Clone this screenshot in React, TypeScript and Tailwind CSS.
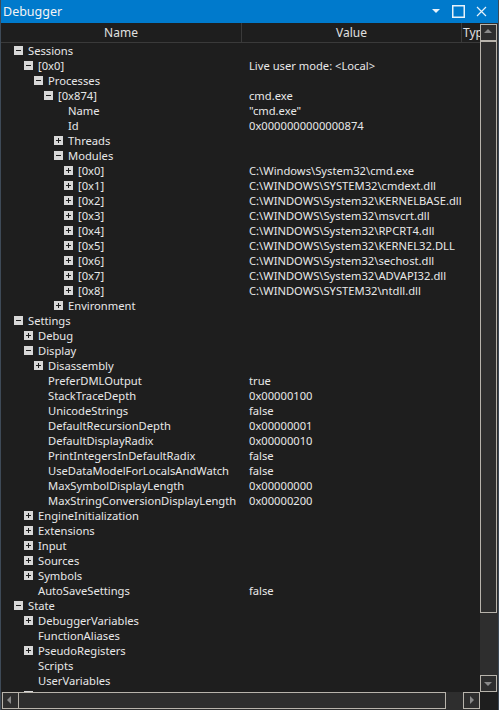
import React from "react";

type Row = {
  level: number;
  name: string;
  value?: string;
  state?: "open" | "closed";
};

const MODULES = [
  "C:\\Windows\\System32\\cmd.exe",
  "C:\\WINDOWS\\SYSTEM32\\cmdext.dll",
  "C:\\WINDOWS\\System32\\KERNELBASE.dll",
  "C:\\WINDOWS\\System32\\msvcrt.dll",
  "C:\\WINDOWS\\System32\\RPCRT4.dll",
  "C:\\WINDOWS\\System32\\KERNEL32.DLL",
  "C:\\WINDOWS\\System32\\sechost.dll",
  "C:\\WINDOWS\\System32\\ADVAPI32.dll",
  "C:\\WINDOWS\\SYSTEM32\\ntdll.dll",
];

const ROWS: Row[] = [
  { level: 0, name: "Sessions", state: "open" },
  { level: 1, name: "[0x0]", value: "Live user mode: <Local>", state: "open" },
  { level: 2, name: "Processes", state: "open" },
  { level: 3, name: "[0x874]", value: "cmd.exe", state: "open" },
  { level: 4, name: "Name", value: "\"cmd.exe\"" },
  { level: 4, name: "Id", value: "0x0000000000000874" },
  { level: 4, name: "Threads", state: "closed" },
  { level: 4, name: "Modules", state: "open" },
  ...MODULES.map((m, i) => ({ level: 5, name: `[0x${i}]`, value: m, state: "closed" as const })),
  { level: 4, name: "Environment", state: "closed" },
  { level: 0, name: "Settings", state: "open" },
  { level: 1, name: "Debug", state: "closed" },
  { level: 1, name: "Display", state: "open" },
  { level: 2, name: "Disassembly", state: "closed" },
  { level: 2, name: "PreferDMLOutput", value: "true" },
  { level: 2, name: "StackTraceDepth", value: "0x00000100" },
  { level: 2, name: "UnicodeStrings", value: "false" },
  { level: 2, name: "DefaultRecursionDepth", value: "0x00000001" },
  { level: 2, name: "DefaultDisplayRadix", value: "0x00000010" },
  { level: 2, name: "PrintIntegersInDefaultRadix", value: "false" },
  { level: 2, name: "UseDataModelForLocalsAndWatch", value: "false" },
  { level: 2, name: "MaxSymbolDisplayLength", value: "0x00000000" },
  { level: 2, name: "MaxStringConversionDisplayLength", value: "0x00000200" },
  { level: 1, name: "EngineInitialization", state: "closed" },
  { level: 1, name: "Extensions", state: "closed" },
  { level: 1, name: "Input", state: "closed" },
  { level: 1, name: "Sources", state: "closed" },
  { level: 1, name: "Symbols", state: "closed" },
  { level: 1, name: "AutoSaveSettings", value: "false" },
  { level: 0, name: "State", state: "open" },
  { level: 1, name: "DebuggerVariables", state: "closed" },
  { level: 1, name: "FunctionAliases" },
  { level: 1, name: "PseudoRegisters", state: "closed" },
  { level: 1, name: "Scripts" },
  { level: 1, name: "UserVariables" },
  { level: 1, name: "ExtensionGallery", state: "closed" },
];

function Expander({ state }: { state: "open" | "closed" }) {
  return (
    <svg width="9" height="9" viewBox="0 0 9 9" className="block">
      <rect x="0" y="0" width="9" height="9" fill="#d8d8d8" />
      <rect x="2" y="4" width="5" height="1" fill="#1e1e1e" />
      {state === "closed" && <rect x="4" y="2" width="1" height="5" fill="#1e1e1e" />}
    </svg>
  );
}

function TreeRow({ row }: { row: Row }) {
  const boxLeft = 14 + row.level * 10;
  const textLeft = boxLeft + 14;
  return (
    <div className="flex h-[15px] items-center shrink-0 whitespace-nowrap">
      <div className="relative w-[241px] shrink-0 h-full flex items-center overflow-hidden">
        {row.state && (
          <div className="absolute top-[3px]" style={{ left: boxLeft - 1 }}>
            <Expander state={row.state} />
          </div>
        )}
        <span style={{ paddingLeft: textLeft - 1 }}>{row.name}</span>
      </div>
      <div className="pl-[7px]">{row.value}</div>
    </div>
  );
}

function ScrollButton({ dir }: { dir: "up" | "down" | "left" | "right" }) {
  const pts = {
    up: "4,9 8,5 12,9",
    down: "4,7 12,7 8,11",
    left: "9,4 9,12 5,8",
    right: "7,4 7,12 11,8",
  }[dir];
  return (
    <div className="w-[17px] h-[17px] border border-[#b8b4ac] flex items-center justify-center shrink-0">
      <svg width="15" height="15" viewBox="1 1 15 15">
        <polygon points={pts} fill="#8a8a8a" />
      </svg>
    </div>
  );
}

export default function App() {
  return (
    <div
      className="w-[499px] h-[710px] bg-[#1e1e1e] text-[#e8e8e8] flex flex-col overflow-hidden border-x border-[#3e4a57] text-[11.2px] leading-[15px]"
      style={{ fontFamily: '"Noto Sans", "Open Sans", sans-serif' }}
    >
      <div className="h-[23px] bg-[#007acc] flex items-center shrink-0 pl-[2px] text-[#f4f4f4]">
        <span className="text-[12.5px]">Debugger</span>
        <div className="ml-auto flex items-center gap-[8px] pr-[11px]">
          <svg width="8" height="5" viewBox="0 0 8 5">
            <polygon points="0,0 8,0 4,4" fill="#e8f2fa" />
          </svg>
          <svg width="13" height="13" viewBox="0 0 13 13" className="ml-[4px]">
            <rect x="0.75" y="0.75" width="11.5" height="11.5" fill="none" stroke="#e8f2fa" strokeWidth="1.5" />
          </svg>
          <svg width="11" height="11" viewBox="0 0 11 11" className="ml-[3px]">
            <path d="M1 1 L10 10 M10 1 L1 10" stroke="#e8f2fa" strokeWidth="1.2" />
          </svg>
        </div>
      </div>

      <div className="flex flex-1 min-h-0">
        <div className="flex-1 min-w-0 flex flex-col overflow-hidden">
          <div className="h-[20px] shrink-0 flex border-b border-[#3a3a3a] text-[#e0e0e0] text-[12px]">
            <div className="w-[241px] shrink-0 flex items-center justify-center border-r border-[#3a3a3a]">Name</div>
            <div className="w-[220px] shrink-0 flex items-center justify-center border-r border-[#3a3a3a]">Value</div>
            <div className="flex items-center pl-[1px] overflow-hidden">Type</div>
          </div>
          <div className="flex flex-col overflow-hidden">
            {ROWS.map((r, i) => (
              <TreeRow key={i} row={r} />
            ))}
          </div>
        </div>
        <div className="w-[18px] shrink-0 bg-[#2e2e2e] flex flex-col pt-[1px] pr-[1px]">
          <ScrollButton dir="up" />
          <div className="h-[572px] border border-[#b8b4ac] shrink-0" />
          <div className="flex-1" />
          <ScrollButton dir="down" />
        </div>
      </div>

      <div className="h-[18px] shrink-0 flex">
        <div className="flex-1 bg-[#2e2e2e] flex items-center pl-[1px] pb-[1px]">
          <ScrollButton dir="left" />
          <div className="w-[427px] h-[17px] border border-[#b8b4ac] border-l-0" />
          <div className="flex-1" />
          <ScrollButton dir="right" />
        </div>
        <div className="w-[18px] bg-[#1e1e1e] shrink-0" />
      </div>
    </div>
  );
}
